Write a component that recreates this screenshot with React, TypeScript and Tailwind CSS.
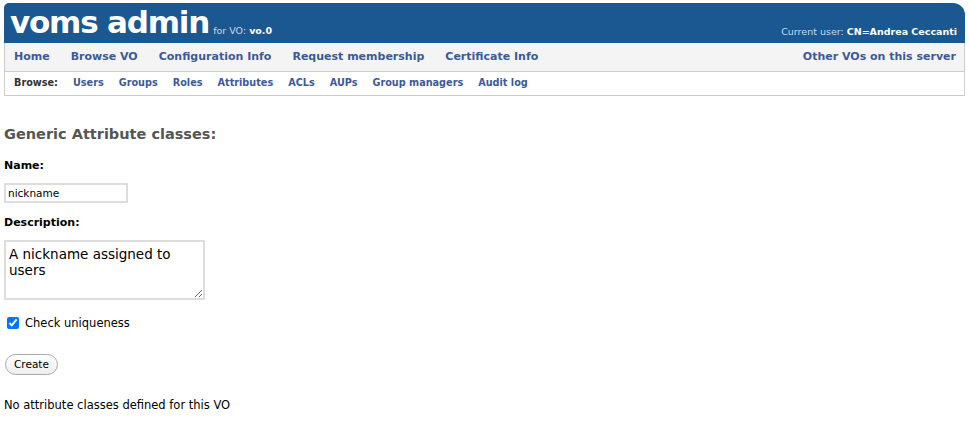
import React from "react";

const navLinks = ["Home", "Browse VO", "Configuration Info", "Request membership", "Certificate Info"];
const subLinks = ["Users", "Groups", "Roles", "Attributes", "ACLs", "AUPs", "Group managers", "Audit log"];

export default function App() {
  return (
    <div className="min-h-[423px] bg-white" style={{ fontFamily: '"DejaVu Sans", "Liberation Sans", sans-serif' }}>
      <div className="px-[4px] pt-[3px]">
        <div className="h-[40px] bg-[#1b5791] rounded-tl-[5px] rounded-tr-[12px] flex items-end justify-between pl-[6px] pr-[8px] pb-[3px]">
          <div className="flex items-end">
            <span className="text-white font-bold text-[31px] leading-[36px] tracking-[-1.2px]">voms admin</span>
            <span className="ml-[4px] mb-[2px] text-[9.5px] text-[#c9d9ec]">for VO: <b className="text-white">vo.0</b></span>
          </div>
          <span className="mb-[1px] text-[9.5px] text-[#c9d9ec]">Current user: <b className="text-white">CN=Andrea Ceccanti</b></span>
        </div>
        <div className="h-[29px] bg-[#f4f4f4] border-x border-b border-[#cccccc] flex items-center justify-between pl-[9px] pr-[8px] pt-[1px]">
          <div className="flex items-center gap-[21px]">
            {navLinks.map((l) => (
              <span key={l} className="text-[11px] font-bold text-[#3c5a9a]">{l}</span>
            ))}
          </div>
          <span className="text-[11px] font-bold text-[#3c5a9a]">Other VOs on this server</span>
        </div>
        <div className="h-[24px] bg-white border-x border-b border-[#cccccc] flex items-center gap-[15px] pl-[9px]">
          <span className="text-[9.7px] font-bold text-[#333]">Browse:</span>
          {subLinks.map((l) => (
            <span key={l} className="text-[9.7px] font-bold text-[#3c5a9a]">{l}</span>
          ))}
        </div>
      </div>
      <div className="px-[4px]">
        <h2 className="mt-[28px] text-[14.5px] font-bold text-[#555]">Generic Attribute classes:</h2>
        <div className="mt-[12px] text-[11px] font-bold text-black">Name:</div>
        <div className="mt-[6px]">
          <input
            readOnly
            value="nickname"
            className="w-[124px] h-[20px] border-2 border-[#dddddd] px-[2px] text-[10.5px] text-black outline-none"
          />
        </div>
        <div className="mt-[11px] text-[11px] font-bold text-black">Description:</div>
        <div className="mt-[8px]">
          <textarea
            readOnly
            value="A nickname assigned to users"
            className="w-[201px] h-[60px] border-2 border-[#dddddd] px-[3px] pt-[4px] pb-[2px] text-[13.5px] leading-[16px] text-black outline-none resize"
          />
        </div>
        <label className="mt-[8px] flex items-center gap-[6px] text-[11.5px] text-black">
          <input type="checkbox" defaultChecked className="ml-[3px] w-[12px] h-[12px]" />
          Check uniqueness
        </label>
        <button className="mt-[22px] ml-[1px] h-[21px] px-[8px] rounded-full border border-[#aaaaaa] bg-gradient-to-b from-white to-[#eeeeee] text-[10.5px] text-black">
          Create
        </button>
        <p className="mt-[22px] text-[11.5px] text-black">No attribute classes defined for this VO</p>
      </div>
    </div>
  );
}
